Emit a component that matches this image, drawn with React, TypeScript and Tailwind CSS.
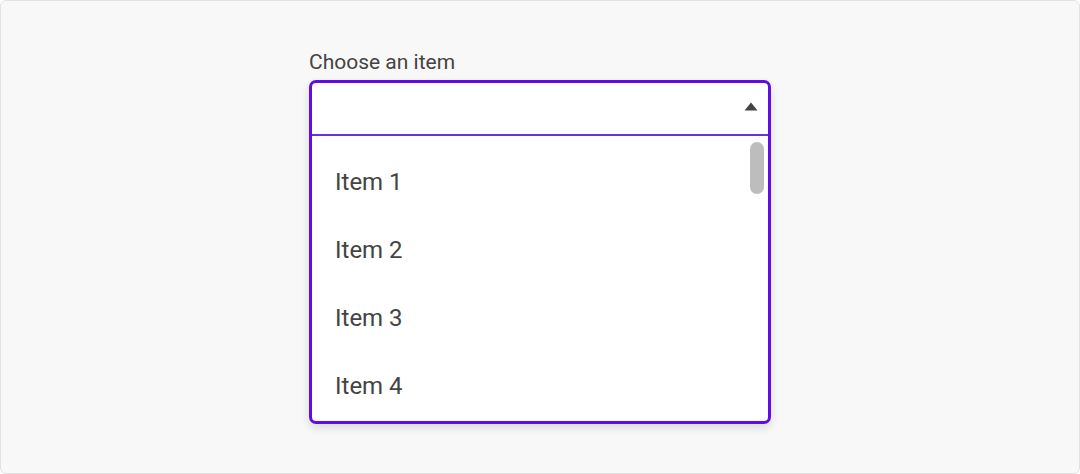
import React from 'react';

const items = ['Item 1', 'Item 2', 'Item 3', 'Item 4'];

const App: React.FC = () => {
  return (
    <div
      className="w-[1080px] h-[474px] bg-[#f8f8f8] border border-[#e2e2e2] rounded-[6px] flex justify-center"
      style={{ fontFamily: 'Roboto, "Liberation Sans", sans-serif' }}
    >
      <div className="w-[462px] pt-[48px]">
        <div className="text-[21px] leading-[26px] text-[#444] mb-[5px]">Choose an item</div>
        <div className="border-[3px] border-[#5f0de4] rounded-[7px] bg-white shadow-[0_4px_10px_rgba(0,0,0,0.12)] overflow-hidden">
          <div className="h-[53px] flex items-center justify-end pr-[10px] pb-[5px] border-b-2 border-[#6d2ee6]">
            <svg width="14" height="9" viewBox="0 0 14 9">
              <path d="M7 0.5 L13.5 8.5 L0.5 8.5 Z" fill="#444" />
            </svg>
          </div>
          <div className="relative h-[285px] pt-[12px]">
            {items.map((item) => (
              <div key={item} className="h-[68px] flex items-center pl-[23px] text-[24px] text-[#444]">
                {item}
              </div>
            ))}
            <div className="absolute right-[4px] top-[6px] w-[14px] h-[52px] rounded-[7px] bg-[#bdbdbd]" />
          </div>
        </div>
      </div>
    </div>
  );
};

export default App;
